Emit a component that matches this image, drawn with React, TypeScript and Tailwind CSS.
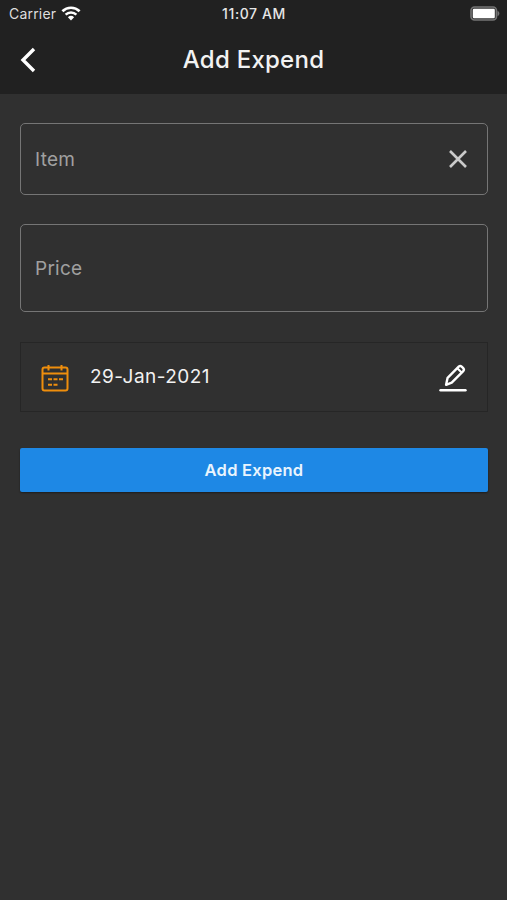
import type { ReactNode } from "react";

function StatusBar() {
  return (
    <div className="grid h-7 grid-cols-3 items-center pl-[8px] pr-[7px] text-[14px] leading-none text-[#dedede]">
      <div className="flex items-center gap-[5px] pl-px">
        <span className="tracking-[0.2px]">Carrier</span>
        <svg className="-mt-[2px]" width="20" height="15" viewBox="0 0 20 15" fill="none">
          <path d="M1.4 5.2a12.4 12.4 0 0 1 17.2 0" stroke="#fff" strokeWidth="2.7" />
          <path d="M4.6 8.7a7.8 7.8 0 0 1 10.8 0" stroke="#fff" strokeWidth="2.4" />
          <path d="M6.9 11.3a4.5 4.5 0 0 1 6.2 0L10 14.6z" fill="#fff" />
        </svg>
      </div>
      <span className="text-center text-[14px] font-medium tracking-[0.6px] text-[#e6e6e6]">
        11:07 AM
      </span>
      <svg className="-mt-[2px] justify-self-end" width="30" height="15" viewBox="0 0 30 15">
        <rect x="1" y="1" width="25.5" height="13" rx="3.5" fill="#333" stroke="#747474" strokeWidth="1.6" />
        <rect x="2.8" y="2.8" width="22" height="9.4" rx="1.2" fill="#fff" />
        <path d="M27.5 5v5c1.2-.3 1.9-1.3 1.9-2.5s-.7-2.2-1.9-2.5z" fill="#747474" />
      </svg>
    </div>
  );
}

function Header() {
  return (
    <header className="h-[94px] bg-[#212121]">
      <StatusBar />
      <div className="grid h-[64px] grid-cols-[60px_1fr_60px] items-center">
        <button className="pl-[20px]" aria-label="Back">
          <svg width="16" height="26" viewBox="0 0 16 26" fill="none">
            <path d="M14 2 3 13l11 11" stroke="#fff" strokeWidth="3.4" />
          </svg>
        </button>
        <h1 className="text-center text-[24px] font-medium tracking-[0.25px] text-[#f2f2f2]">
          Add Expend
        </h1>
      </div>
    </header>
  );
}

function Field({ label, className, children }: { label: string; className: string; children?: ReactNode }) {
  return (
    <div
      className={`flex items-center justify-between rounded-[5px] border-[1.5px] border-[#757575] pl-[14px] pr-[20px] ${className}`}
    >
      <span className="pt-[2px] text-[19px] tracking-[0.25px] text-[#a0a0a0]">{label}</span>
      {children}
    </div>
  );
}

function CalendarIcon() {
  return (
    <svg className="mt-[2px]" width="28" height="28" viewBox="0 0 28 28" fill="none" stroke="#ef8e0c" strokeWidth="2">
      <rect x="1.5" y="3.5" width="25" height="23" rx="2" />
      <path d="M1.5 9.5h25M7.5 1v5.5M20.500 1v5.500" />
      <path d="M7 15.2h4M12.5 15.2h4M18 15.2h4M7 20.7h4M12.5 20.7h4" />
    </svg>
  );
}

function PencilIcon() {
  return (
    <svg className="mt-px" width="28" height="28" viewBox="0 0 28 28" fill="none" stroke="#fff">
      <path
        d="M19.7 2.6q1.5-1.4 3 0l1.5 1.5q1.4 1.5 0 3L12.7 18.6l-5.600 2.200 1.500-7z"
        strokeWidth="2.4"
        strokeLinejoin="round"
      />
      <path d="m18.3 4.2 4.6 4.6" strokeWidth="2" />
      <path d="M1.5 26.3h25" strokeWidth="2.4" strokeLinecap="round" />
    </svg>
  );
}

export default function App() {
  return (
    <div className="flex min-h-screen w-full flex-col bg-[#303030] font-['Inter',sans-serif]">
      <Header />
      <main className="flex flex-col pl-[20px] pr-[19px] pt-[29px]">
        <Field label="Item" className="h-[72px]">
          <svg width="18" height="18" viewBox="0 0 18 18" fill="none">
            <path d="m1 1 16 16M17 1 1 17" stroke="#cacaca" strokeWidth="2.6" />
          </svg>
        </Field>
        <Field label="Price" className="mt-[29px] h-[88px]" />
        <div className="mt-[30px] flex h-[70px] items-center border border-[#262626] pl-[20px] pr-[20px]">
          <CalendarIcon />
          <span className="ml-[21px] flex-1 pt-px text-[19px] tracking-[0.45px] text-[#f2f2f2]">29-Jan-2021</span>
          <PencilIcon />
        </div>
        <button className="mt-[36px] h-[44px] rounded-[2px] bg-[#1e88e5] text-[16.5px] font-semibold tracking-[0.25px] text-[#e9f4fd] shadow-[0_1px_2px_rgba(0,0,0,0.4)]">
          Add Expend
        </button>
      </main>
    </div>
  );
}
